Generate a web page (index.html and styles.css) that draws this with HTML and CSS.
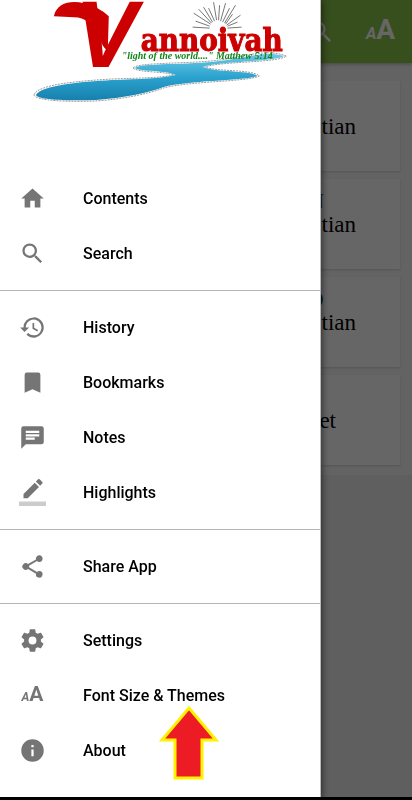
FILE: index.html
```html
<!DOCTYPE html>
<html lang="en">
<head>
<meta charset="utf-8">
<meta name="viewport" content="width=device-width, initial-scale=1">
<title>Vannoivah</title>
<link rel="stylesheet" href="styles.css">
</head>
<body>
<div class="app">
  <header class="topbar">
    <button class="tool" aria-label="Search"><svg class="glass" viewBox="0 0 24 24"><path d="M15.5 14h-.79l-.28-.27A6.47 6.47 0 0 0 16 9.5 6.5 6.5 0 1 0 9.5 16c1.61 0 3.09-.59 4.23-1.57l.27.28v.79l5 4.99L20.49 19zm-6 0a4.5 4.5 0 1 1 0-9 4.5 4.5 0 0 1 0 9z"/></svg></button>
    <button class="tool letters letters-large" aria-label="Font size"><i>A</i><b>A</b></button>
  </header>
  <main class="books">
    <article class="card"><p class="mark"></p><p class="name">tian</p></article>
    <article class="card"><p class="mark">N</p><p class="name">tian</p></article>
    <article class="card"><p class="mark strong">O</p><p class="name">tian</p></article>
    <article class="card short"><p class="mark"></p><p class="name">et</p></article>
  </main>
</div>
<div class="scrim"></div>
<aside class="drawer">
  <svg class="logo" viewBox="0 0 321 171" role="img" aria-label="Vannoivah">
    <defs>
      <linearGradient id="water" x1="0" y1="0" x2="0" y2="1"><stop offset="0" stop-color="#6cc9e6"/><stop offset=".5" stop-color="#2ba3cf"/><stop offset="1" stop-color="#1780ad"/></linearGradient>
    </defs>
    <path class="shore" d="M34 95C38 84 80 81 112 79C140 78 160 78 174 75C166 71 140 73 133 68C138 62 190 64 220 60C244 57 266 48 287 56C278 63 222 61 205 67C220 72 252 69 260 76C246 82 190 81 164 88C148 94 124 99 96 101C70 102 36 101 34 95Z"/>
    <path fill="url(#water)" d="M36 95C42 85 80 82 112 80C140 79 160 79 176 75C166 70 142 72 135 68C140 63 190 65 220 61C244 58 266 50 285 56C274 62 218 61 203 67C220 73 250 70 258 76C244 81 190 80 164 87C148 93 124 98 96 100C70 101 38 100 36 95Z"/>
    <path class="rays" d="M210 28L193 27M210 26L196 21M211 24L194 13M212 23L199 9M213 22L204 7M215 21L209 8M217 20L214 2M219 20L220 5M221 21L226 3M223 22L230 8M225 23L236 5M226 24L233 14M227 25L241 15M228 26L238 22M228 28L242 27"/>
    <path class="red" d="M54 16C57 3 70 0 84 3Q98 6 109 16L108 50C98 46 98 17 74 17Z"/>
    <text class="red initial" x="75" y="67">V</text>
    <text class="red word" x="141" y="51">annoivah</text>
    <text class="tagline" x="122" y="59">"light of the world...." Matthew 5:14</text>
  </svg>
  <nav class="menu">
    <a href="#contents"><svg viewBox="0 0 24 24"><path d="M10 20v-6h4v6h5v-8h3L12 3 2 12h3v8z"/></svg>Contents</a>
    <a href="#search"><svg viewBox="0 0 24 24"><path d="M15.5 14h-.79l-.28-.27A6.47 6.47 0 0 0 16 9.5 6.5 6.5 0 1 0 9.5 16c1.61 0 3.09-.59 4.23-1.57l.27.28v.79l5 4.99L20.49 19zm-6 0a4.5 4.5 0 1 1 0-9 4.5 4.5 0 0 1 0 9z"/></svg>Search</a>
    <hr>
    <a href="#history"><svg viewBox="0 0 24 24"><path d="M13 3a9 9 0 0 0-9 9H1l3.89 3.89.07.14L9 12H6a7 7 0 1 1 2.06 4.94l-1.42 1.42A9 9 0 1 0 13 3zm-1 5v5l4.28 2.54.72-1.21-3.5-2.08V8z"/></svg>History</a>
    <a href="#bookmarks"><svg viewBox="0 0 24 24"><path d="M17 3H7a2 2 0 0 0-2 2v16l7-3 7 3V5a2 2 0 0 0-2-2z"/></svg>Bookmarks</a>
    <a href="#notes"><svg viewBox="0 0 24 24"><path fill-rule="evenodd" d="M20 2H4a2 2 0 0 0-2 2v18l4-4h14a2 2 0 0 0 2-2V4a2 2 0 0 0-2-2zM6 6h12v2H6zM6 9h12v2H6zM6 12h8v2H6z"/></svg>Notes</a>
    <a href="#highlights"><svg viewBox="0 0 24 24"><path d="M17.75 7L14 3.25l-10 10V17h3.75zM20.71 4.04a1 1 0 0 0 0-1.41L18.37.29a1 1 0 0 0-1.41 0L15 2.25 18.75 6z"/><path class="pale" d="M0 20h24v4H0z"/></svg>Highlights</a>
    <hr>
    <a href="#share"><svg viewBox="0 0 24 24"><path d="M18 16.08c-.76 0-1.44.3-1.96.77L8.91 12.7a3.3 3.3 0 0 0 0-1.4l7.05-4.11A3 3 0 1 0 15 5c0 .24.04.47.09.7L8.04 9.81a3 3 0 1 0 0 4.38l7.12 4.16A2.92 2.92 0 1 0 18 16.08z"/></svg>Share App</a>
    <hr>
    <a href="#settings"><svg viewBox="0 0 24 24"><path d="M19.43 12.98c.04-.32.07-.64.07-.98s-.03-.66-.07-.98l2.11-1.65c.19-.15.24-.42.12-.64l-2-3.46c-.12-.22-.39-.3-.61-.22l-2.49 1c-.52-.4-1.08-.73-1.69-.98l-.38-2.65A.49.49 0 0 0 14 2h-4c-.25 0-.46.18-.49.42l-.38 2.65c-.61.25-1.17.59-1.69.98l-2.49-1c-.23-.09-.49 0-.61.22l-2 3.46c-.13.22-.07.49.12.64l2.11 1.65c-.04.32-.07.65-.07.98s.03.66.07.98l-2.11 1.65c-.19.15-.24.42-.12.64l2 3.46c.12.22.39.3.61.22l2.49-1c.52.4 1.08.73 1.69.98l.38 2.65c.03.24.24.42.49.42h4c.25 0 .46-.18.49-.42l.38-2.65c.61-.25 1.17-.59 1.69-.98l2.49 1c.23.09.49 0 .61-.22l2-3.46c.12-.22.07-.49-.12-.64zM12 15.5a3.5 3.5 0 1 1 0-7 3.5 3.5 0 0 1 0 7z"/></svg>Settings</a>
    <a href="#themes"><span class="letters" aria-hidden="true"><i>A</i><b>A</b></span>Font Size &amp; Themes</a>
    <a href="#about"><svg viewBox="0 0 24 24"><path d="M12 2a10 10 0 1 0 0 20 10 10 0 0 0 0-20zm1 15h-2v-6h2zm0-8h-2V7h2z"/></svg>About</a>
  </nav>
  <svg class="pointer" viewBox="0 0 60 76" aria-hidden="true"><path d="M30 3L57 35H43V73H16V35H3Z"/></svg>
</aside>
<div class="system"></div>
</body>
</html>
```
FILE: styles.css
```css
* { box-sizing: border-box; }
body { margin: 0; background: #ededed; font-family: Roboto, sans-serif; }
.app { min-height: 100vh; }
.topbar { display: flex; justify-content: flex-end; align-items: center; gap: 32px; height: 63px; padding-right: 18px; background: #8bc34a; box-shadow: 0 1px 4px rgba(0,0,0,.3); position: relative; }
.tool { padding: 0; border: 0; background: none; color: #fff; }
.glass { display: block; width: 28px; fill: #fff; }
.letters { display: inline-flex; align-items: baseline; justify-content: center; flex: none; width: 27px; font-size: 21px; line-height: 27px; color: #757575; }
.letters i { font-size: 12px; font-weight: 700; }
.letters b { font-weight: 700; }
.letters-large { color: #fff; font-size: 28px; font-family: inherit; }
.letters-large i { font-size: 16px; }
.books { display: flex; flex-direction: column; gap: 8px; padding: 18px 12px 10px 8px; background: #f7f7f7; }
.card { height: 90px; padding: 10px 44px 0 0; background: #fff; box-shadow: 0 1px 2px rgba(0,0,0,.15); text-align: right; font-family: "Liberation Serif", serif; }
.card p { margin: 0; }
.mark { height: 24px; padding-right: 32px; font-size: 20px; line-height: 24px; color: #174d1a; }
.strong { font-weight: 700; font-size: 24px; }
.name { font-size: 23px; line-height: 24px; color: #000; }
.short .name { padding-right: 20px; }
.scrim { position: fixed; inset: 0; background: rgba(0,0,0,.6); }
.drawer { position: fixed; top: 0; bottom: 0; left: 0; width: 78%; overflow: hidden auto; background: #fff; box-shadow: 0 0 8px rgba(0,0,0,.7); border-right: 1px solid #bbb; }
.logo { display: block; width: 100%; height: 171px; }
.red { fill: #c00; }
.initial { font: italic 700 94px "Liberation Sans", sans-serif; }
.word { font: 700 31px "DejaVu Serif Condensed", "DejaVu Serif", serif; stroke: #c00; stroke-width: 1; }
.tagline { font: italic 700 10px "Liberation Serif", serif; fill: #14851b; }
.shore { fill: #fff; stroke: #999; stroke-width: 1; stroke-dasharray: 2 1; }
.rays { fill: none; stroke: #777; stroke-width: 1; }
.menu a { display: flex; align-items: center; gap: 37px; height: 55px; padding-left: 19px; color: #000; font-size: 16px; font-weight: 500; text-decoration: none; }
.menu svg { width: 27px; height: 27px; flex: none; fill: #757575; overflow: visible; }
.menu .pale { fill: #ccc; }
.menu hr { height: 1px; margin: 9px 0; border: 0; background: #b5b5b5; }
.pointer { position: absolute; left: 159px; top: 705px; width: 60px; height: 76px; fill: #ed1c24; stroke: #fff200; stroke-width: 3; }
.system { position: fixed; left: 0; right: 0; bottom: 0; height: 3px; background: #000; }
```
